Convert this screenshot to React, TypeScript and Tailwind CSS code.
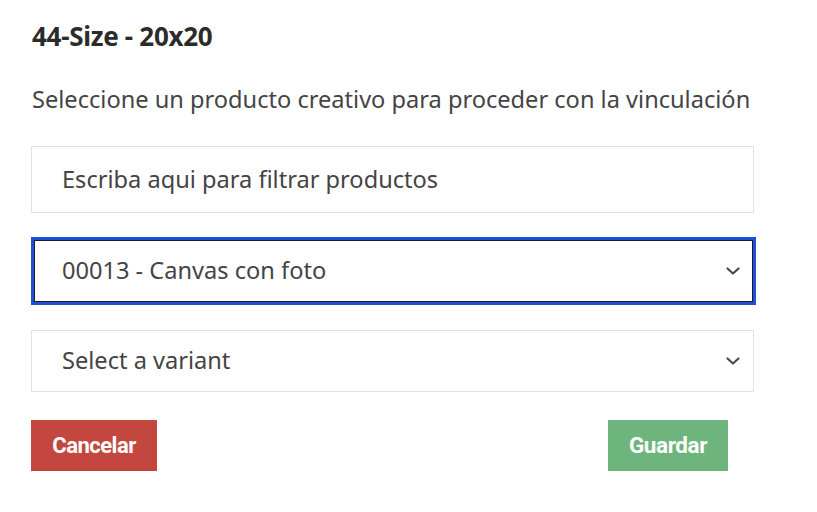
const fuente = { fontFamily: '"Noto Sans", "Open Sans", sans-serif' };
const boton = { fontFamily: 'Roboto, "Liberation Sans", sans-serif' };

function Chevron() {
  return (
    <svg width="16" height="16" viewBox="0 0 16 16" className="text-[#4a4a4a]">
      <path d="M2.5 5.5l5.5 5 5.5-5" fill="none" stroke="currentColor" strokeWidth="2.2" strokeLinecap="round" strokeLinejoin="round" />
    </svg>
  );
}

export default function App() {
  return (
    <div className="w-[817px] h-[512px] bg-white text-[#333]" style={fuente}>
      <div className="pl-[31px] pr-[63px] pt-[22px]">
        <h3 className="text-[26px] font-bold text-[#2b2b2b] pl-[1px] leading-[28px] tracking-[-0.3px]">44-Size - 20x20</h3>
        <p className="text-[23.6px] text-[#444] mt-[35px] pl-[1px] leading-[28px] whitespace-nowrap">
          Seleccione un producto creativo para proceder con la vinculación
        </p>

        <div className="mt-[33px] h-[67px] border border-[#e2e2e2] flex items-center px-[30px] text-[23.6px] text-[#444]">
          Escriba aqui para filtrar productos
        </div>

        <div className="mt-[24px] h-[68px] mr-[-2px] border-[3px] border-[#1f4fd8] shadow-[inset_0_0_0_1px_#1a1a2e] flex items-center justify-between pl-[28px] pr-[12px] text-[23.6px] text-[#444]">
          <span>00013 - Canvas con foto</span>
          <Chevron />
        </div>

        <div className="mt-[25px] h-[62px] border border-[#e2e2e2] flex items-center justify-between pl-[30px] pr-[12px] text-[23.6px] text-[#444]">
          <span>Select a variant</span>
          <Chevron />
        </div>

        <div className="mt-[28px] flex justify-between pr-[26px]">
          <button
            className="w-[126px] h-[51px] bg-[#c4473f] text-white text-[22px] font-bold tracking-[-0.5px]"
            style={boton}
          >
            Cancelar
          </button>
          <button
            className="w-[120px] h-[51px] bg-[#6db57c] text-white text-[22.5px] font-bold tracking-[-0.4px]"
            style={boton}
          >
            Guardar
          </button>
        </div>
      </div>
    </div>
  );
}
